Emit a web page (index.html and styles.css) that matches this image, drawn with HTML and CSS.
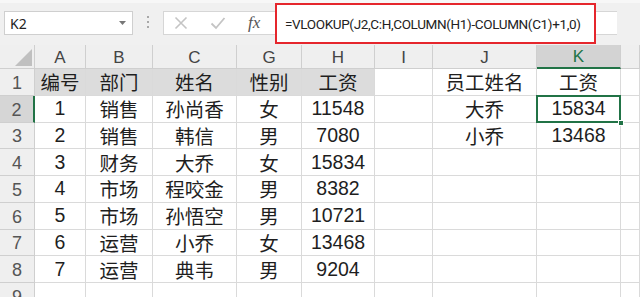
FILE: index.html
```html
<html>
  <head>
    <title>Sheet</title>
    <link rel="stylesheet" href="styles.css">
  </head>
  <body>
    <div class="app">
      <div class="toolbar">
        <div class="namebox">
          <span>K2</span>
          <svg class="caret" width="7" height="4" viewBox="0 0 7 4"><path d="M0 0h7L3.5 4z" fill="#777"/></svg>
        </div>
        <div class="dots"><i></i><i></i><i></i></div>
        <div class="fxbox">
          <svg class="tool" width="14" height="14" viewBox="0 0 14 14"><path d="M1.5 1.5l11 11M12.5 1.5l-11 11" stroke="#c4c4c4" stroke-width="1.6" fill="none"/></svg>
          <svg class="tool" width="16" height="14" viewBox="0 0 16 14"><path d="M1.5 7.5l4.5 4.5 8.5-10" stroke="#c4c4c4" stroke-width="1.8" fill="none"/></svg>
          <span class="fx">fx</span>
        </div>
        <div class="formula">
          <div class="mark">=VLOOKUP(J2,C:H,COLUMN(H1)-COLUMN(C1)+1,0)</div>
        </div>
      </div>

      <div class="sheet">
        <div class="h corner"><svg width="17" height="17" viewBox="0 0 17 17"><path d="M17 0v17H0z" fill="#c0c0c0"/></svg></div>
        <div class="h col">A</div>
        <div class="h col">B</div>
        <div class="h col">C</div>
        <div class="h col">G</div>
        <div class="h col">H</div>
        <div class="h col">I</div>
        <div class="h col">J</div>
        <div class="h col active-col">K</div>
        <div class="h col"></div>

        <div class="h row">1</div>
        <div class="c fill">编号</div>
        <div class="c fill">部门</div>
        <div class="c fill">姓名</div>
        <div class="c fill">性别</div>
        <div class="c fill">工资</div>
        <div class="c"></div>
        <div class="c">员工姓名</div>
        <div class="c">工资</div>
        <div class="c"></div>

        <div class="h row active-row">2</div>
        <div class="c">1</div>
        <div class="c">销售</div>
        <div class="c">孙尚香</div>
        <div class="c">女</div>
        <div class="c">11548</div>
        <div class="c"></div>
        <div class="c">大乔</div>
        <div class="c sel">15834<span class="handle"></span></div>
        <div class="c"></div>

        <div class="h row">3</div>
        <div class="c">2</div>
        <div class="c">销售</div>
        <div class="c">韩信</div>
        <div class="c">男</div>
        <div class="c">7080</div>
        <div class="c"></div>
        <div class="c">小乔</div>
        <div class="c">13468</div>
        <div class="c"></div>

        <div class="h row">4</div>
        <div class="c">3</div>
        <div class="c">财务</div>
        <div class="c">大乔</div>
        <div class="c">女</div>
        <div class="c">15834</div>
        <div class="c"></div>
        <div class="c"></div>
        <div class="c"></div>
        <div class="c"></div>

        <div class="h row">5</div>
        <div class="c">4</div>
        <div class="c">市场</div>
        <div class="c">程咬金</div>
        <div class="c">男</div>
        <div class="c">8382</div>
        <div class="c"></div>
        <div class="c"></div>
        <div class="c"></div>
        <div class="c"></div>

        <div class="h row">6</div>
        <div class="c">5</div>
        <div class="c">市场</div>
        <div class="c">孙悟空</div>
        <div class="c">男</div>
        <div class="c">10721</div>
        <div class="c"></div>
        <div class="c"></div>
        <div class="c"></div>
        <div class="c"></div>

        <div class="h row">7</div>
        <div class="c">6</div>
        <div class="c">运营</div>
        <div class="c">小乔</div>
        <div class="c">女</div>
        <div class="c">13468</div>
        <div class="c"></div>
        <div class="c"></div>
        <div class="c"></div>
        <div class="c"></div>

        <div class="h row">8</div>
        <div class="c">7</div>
        <div class="c">运营</div>
        <div class="c">典韦</div>
        <div class="c">男</div>
        <div class="c">9204</div>
        <div class="c"></div>
        <div class="c"></div>
        <div class="c"></div>
        <div class="c"></div>

        <div class="h row">9</div>
        <div class="c"></div>
        <div class="c"></div>
        <div class="c"></div>
        <div class="c"></div>
        <div class="c"></div>
        <div class="c"></div>
        <div class="c"></div>
        <div class="c"></div>
        <div class="c"></div>
      </div>
    </div>
  </body>
</html>
```

FILE: styles.css
```css
html, body {
  margin: 0;
  background: #ffffff;
}
* {
  box-sizing: border-box;
}
.app {
  width: 640px;
  height: 297px;
  overflow: hidden;
  font-family: "Liberation Sans", "Noto Sans CJK SC", sans-serif;
}

/* formula bar */
.toolbar {
  height: 45px;
  background: #f0f0f0;
  border-top: 3px solid #f7f7f7;
  display: flex;
  align-items: flex-start;
}
.namebox {
  margin: 8px 0 0 4px;
  width: 129px;
  height: 24px;
  background: #fff;
  border: 1px solid #cfcfcf;
  display: flex;
  align-items: center;
  justify-content: space-between;
  padding: 0 6px 0 5px;
  font-family: "Noto Sans", sans-serif;
  font-size: 14px;
  color: #222;
}
.dots {
  width: 30px;
  height: 32px;
  display: flex;
  flex-direction: column;
  align-items: center;
  justify-content: center;
  gap: 3px;
  padding-top: 5px;
}
.dots i {
  width: 2px;
  height: 2px;
  background: #a8a8a8;
}
.fxbox {
  margin-top: 8px;
  width: 112px;
  height: 24px;
  background: #fff;
  border: 1px solid #d6d6d6;
  border-right: 0;
  display: flex;
  align-items: center;
  padding-left: 10px;
  gap: 22px;
}
.fx {
  margin-left: 0;
  font-family: "Liberation Serif", serif;
  font-style: italic;
  font-size: 17px;
  color: #555;
}
.formula {
  position: relative;
  margin-top: 8px;
  width: 342px;
  height: 24px;
  background: #fff;
  border-top: 1px solid #d6d6d6;
  border-bottom: 1px solid #d6d6d6;
}
.mark {
  position: absolute;
  left: 0;
  top: -9px;
  width: 321px;
  height: 41px;
  background: #fff;
  border: 2px solid #e5262c;
  padding-left: 8px;
  display: flex;
  align-items: center;
  font-family: Roboto, sans-serif;
  font-size: 13.5px;
  letter-spacing: -0.35px;
  color: #222;
  white-space: nowrap;
}

/* grid */
.sheet {
  display: grid;
  grid-template-columns: 35px 51px 67px 84px 65px 73px 58px 104px 84px 19px;
  grid-template-rows: 24px repeat(9, 26.75px);
  font-size: 19.5px;
  color: #1e1e1e;
}
.sheet > div {
  display: flex;
  align-items: center;
  justify-content: center;
  white-space: nowrap;
  overflow: hidden;
}
.h {
  background: #efefef;
  color: #444;
  border-right: 1px solid #cfcfcf;
  border-bottom: 1px solid #cfcfcf;
}
.col {
  font-size: 17px;
  padding-top: 2px;
}
.row {
  font-size: 18px;
  color: #555;
  padding-top: 3px;
}
.corner {
  justify-content: flex-end !important;
  align-items: flex-end !important;
  padding: 0 2px 2px 0;
}
.active-col {
  background: #d3d3d3;
  color: #217346;
  border-bottom: 2px solid #217346;
}
.active-row {
  background: #d6d6d6;
  border-right: 2px solid #217346;
}
.c {
  border-right: 1px solid #dadada;
  border-bottom: 1px solid #dadada;
}
.fill {
  background: #dcdcdc;
}
.sheet > .sel {
  position: relative;
  overflow: visible;
}
.sel::after {
  content: "";
  position: absolute;
  left: -1px;
  top: -1px;
  right: -1px;
  bottom: -1px;
  border: 2px solid #217346;
}
.handle {
  position: absolute;
  right: -4px;
  bottom: -4px;
  width: 6px;
  height: 6px;
  background: #217346;
  border: 1px solid #fff;
  z-index: 2;
}
```
